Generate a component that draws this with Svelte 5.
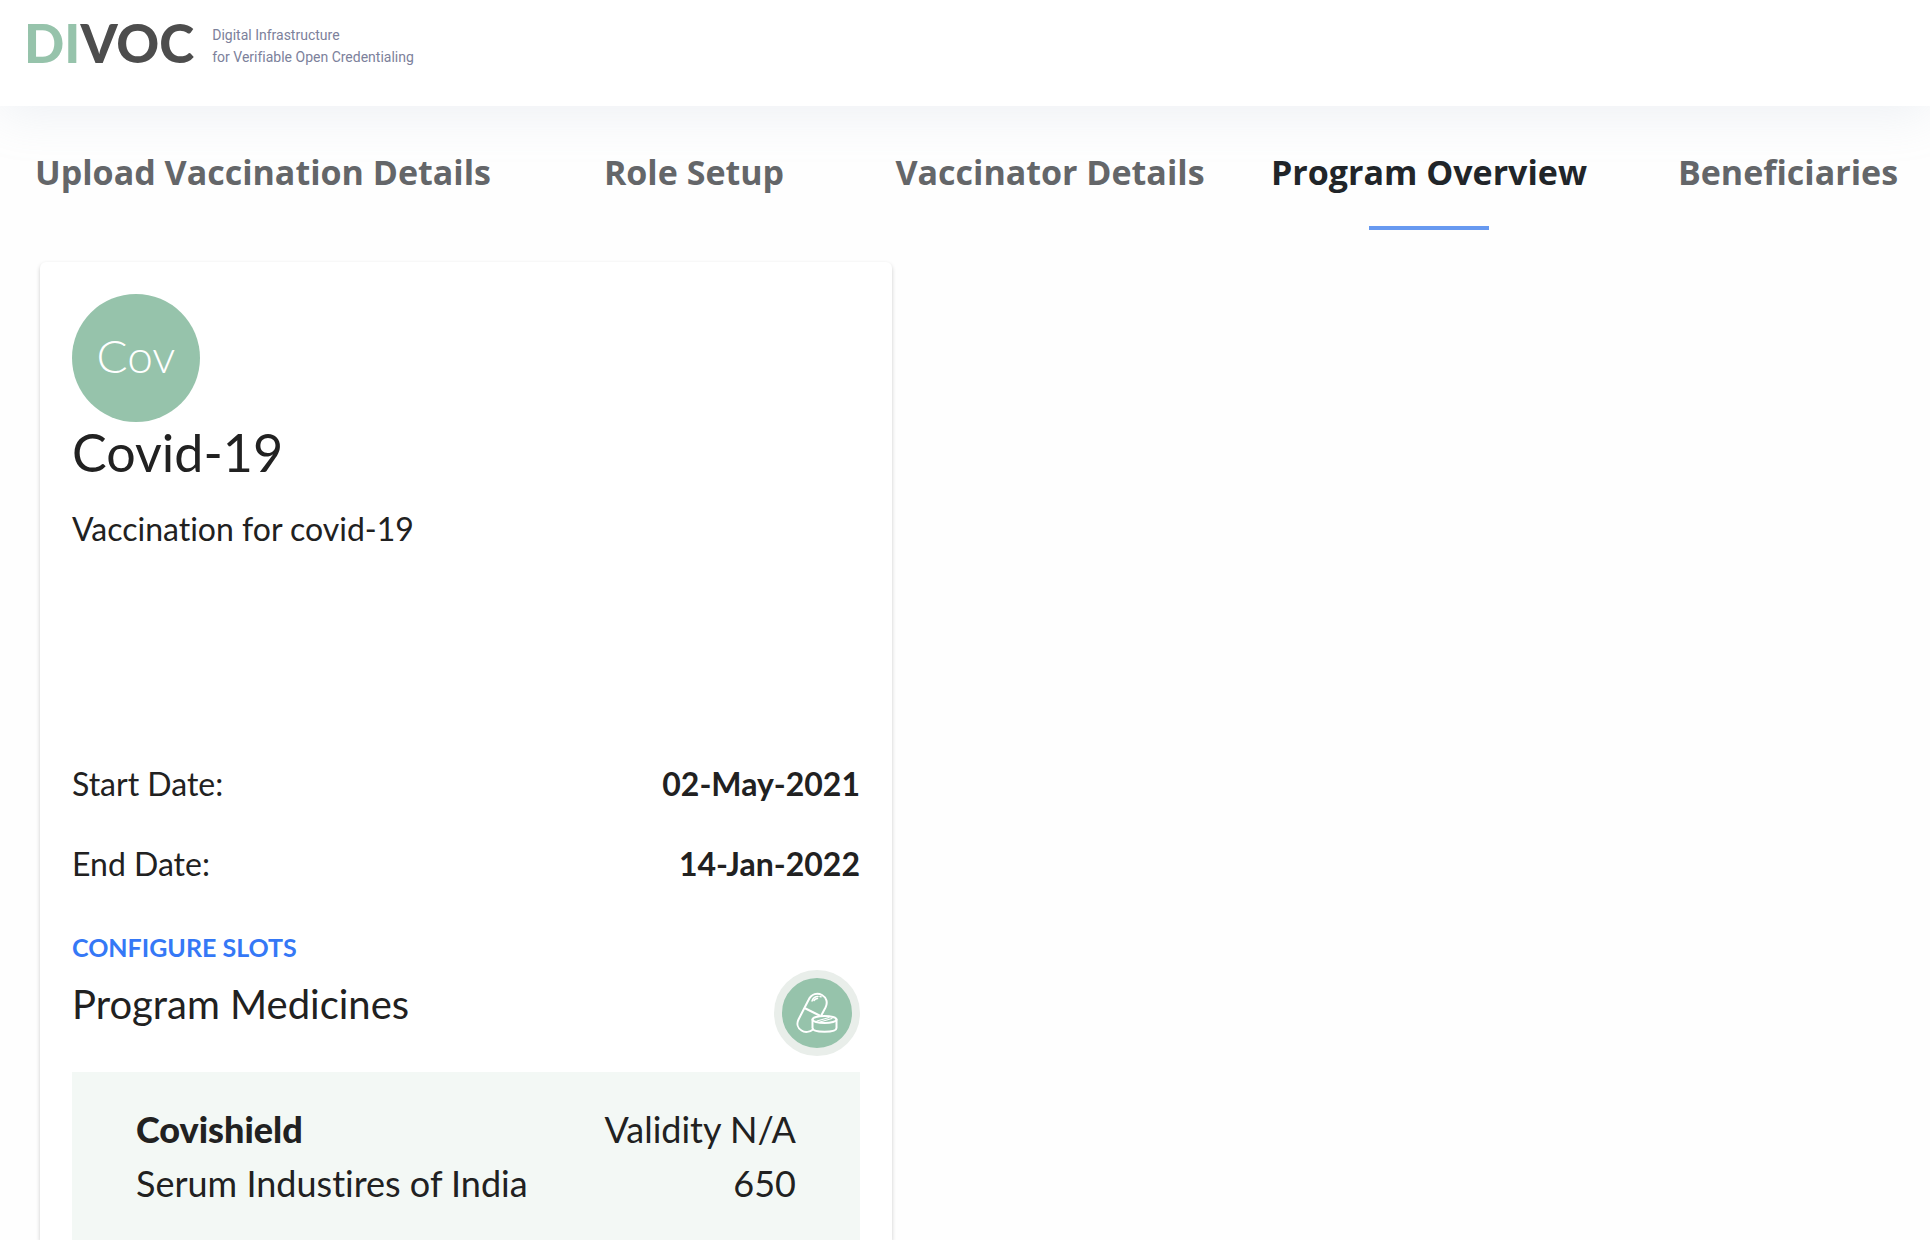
<script>
  const tabs = [
    'Upload Vaccination Details',
    'Role Setup',
    'Vaccinator Details',
    'Program Overview',
    'Beneficiaries'
  ];
  let active = $state('Program Overview');

  const dates = [
    { label: 'Start Date:', value: '02-May-2021' },
    { label: 'End Date:', value: '14-Jan-2022' }
  ];
</script>

<div class="page">
  <header class="top">
    <a class="brand" href="#home">
      <span class="wordmark"><span class="green">DI</span>VOC</span>
      <span class="tagline">Digital Infrastructure<br />for Verifiable Open Credentialing</span>
    </a>
  </header>

  <nav class="tabs">
    {#each tabs as tab}
      <button class="tab" class:active={tab === active} onclick={() => (active = tab)}>{tab}</button>
    {/each}
  </nav>

  <main>
    <article class="card">
      <div class="avatar">Cov</div>
      <h1>Covid-19</h1>
      <p class="description">Vaccination for covid-19</p>

      <dl>
        {#each dates as date}
          <div class="date">
            <dt>{date.label}</dt>
            <dd>{date.value}</dd>
          </div>
        {/each}
      </dl>

      <button class="configure">CONFIGURE SLOTS</button>

      <div class="medicines">
        <h2>Program Medicines</h2>
        <span class="badge">
          <svg viewBox="0 0 42 42" fill="none" stroke="#fff" stroke-width="2" stroke-linecap="round" stroke-linejoin="round" aria-hidden="true">
            <path d="M17 37.500C14 40 9 41 5.500 38.500C1.500 36 0.500 31.500 2.500 27.500L12.500 8C15.500 1.500 21.500 0.500 26 3C30.500 5.500 32 10.500 29.500 15.500L25.500 23" />
            <path d="M9.500 16.500L23.500 23.500" />
            <path d="M16 9C17 6 19.500 4.500 22 4.500M24 4.500L25 4.800M18 8.500C19 7 20 6.500 21.500 6.500" stroke-width="1.500" />
            <ellipse cx="28.500" cy="27.500" rx="12" ry="3.500" />
            <path d="M16.500 27.500V36C16.500 38.500 22 39.800 28.500 39.800S40.500 38.500 40.500 36V27.500" />
            <path d="M21 29L33 25.500M24 30L36 26.500" stroke-width="1.200" />
          </svg>
        </span>
      </div>

      <section class="panel">
        <div class="line"><strong>Covishield</strong><span>Validity N/A</span></div>
        <div class="line"><span>Serum Industires of India</span><span>650</span></div>
      </section>
    </article>
  </main>
</div>

<style>
  :global(body) {
    margin: 0;
    background: #fefefe;
  }

  .page {
    min-height: 100vh;
    display: flex;
    flex-direction: column;
    font-family: Lato, 'Open Sans', sans-serif;
    font-weight: 400;
    font-variant-ligatures: none;
    color: #212121;
  }

  button {
    border: 0;
    padding: 0;
    background: none;
    font-family: inherit;
    cursor: pointer;
  }

  .top {
    box-sizing: border-box;
    height: 106px;
    padding: 13px 24px;
    background: #fff;
    box-shadow: 0 8px 50px rgba(160, 175, 200, 0.18);
  }

  .brand {
    display: inline-flex;
    align-items: center;
    gap: 18px;
    text-decoration: none;
  }

  .wordmark {
    font-size: 53px;
    line-height: 60px;
    font-weight: 900;
    color: #4d4d4d;
  }

  .green {
    color: #96c3ab;
  }

  .tagline {
    padding-top: 6px;
    font-family: Roboto, sans-serif;
    font-size: 14px;
    line-height: 22px;
    color: #7c819b;
  }

  .tabs {
    display: grid;
    grid-template-columns: 526fr 336fr 376fr 382fr 310fr;
  }

  .tab {
    display: flex;
    flex-direction: column;
    align-items: center;
    padding-top: 42px;
    font-family: 'Open Sans', sans-serif;
    font-size: 34px;
    line-height: 48px;
    font-weight: 700;
    font-variant-ligatures: none;
    color: #646669;
    white-space: nowrap;
  }

  .tab:last-child {
    padding-left: 26px;
  }

  .tab::after {
    content: '';
    width: 120px;
    height: 4px;
    margin-top: 30px;
  }

  .active {
    color: #212529;
  }

  .active::after {
    background: #6799f0;
  }

  main {
    flex: 1;
    display: flex;
    padding: 32px 40px 0;
  }

  .card {
    box-sizing: border-box;
    width: 100%;
    max-width: 852px;
    display: flex;
    flex-direction: column;
    padding: 32px 32px 0;
    border-radius: 6px 6px 0 0;
    background: #fff;
    box-shadow: 0 2px 4px rgba(0, 0, 0, 0.2);
  }

  .avatar {
    width: 128px;
    height: 128px;
    border-radius: 50%;
    background: #96c3ab;
    color: #fff;
    font-size: 46px;
    line-height: 124px;
    font-weight: 300;
    text-align: center;
  }

  h1 {
    margin: 0;
    font-size: 52px;
    line-height: 60px;
    font-weight: 400;
  }

  .description {
    min-height: 240px;
    margin: 22px 0 0;
    font-size: 32px;
    line-height: 50px;
  }

  dl,
  dd {
    margin: 0;
  }

  .date {
    display: flex;
    justify-content: space-between;
    font-size: 32px;
    line-height: 80px;
  }

  dd {
    font-weight: 700;
  }

  .configure {
    align-self: flex-start;
    margin: 24px 0 4px;
    font-size: 25px;
    line-height: 38px;
    font-weight: 700;
    color: #3578f6;
  }

  .medicines {
    display: flex;
    justify-content: space-between;
    align-items: flex-start;
  }

  h2 {
    margin: 0;
    font-size: 40px;
    line-height: 68px;
    font-weight: 400;
  }

  .badge {
    display: grid;
    place-items: center;
    width: 70px;
    height: 70px;
    border: 8px solid #e9eeea;
    border-radius: 50%;
    background: #96c3ab;
  }

  .badge svg {
    width: 42px;
    height: 42px;
  }

  .panel {
    flex: 1;
    margin-top: 16px;
    padding: 30px 64px 28px;
    background: #f3f8f5;
  }

  .line {
    display: flex;
    justify-content: space-between;
    font-size: 36px;
    line-height: 54px;
  }

  strong {
    font-weight: 900;
  }
</style>
